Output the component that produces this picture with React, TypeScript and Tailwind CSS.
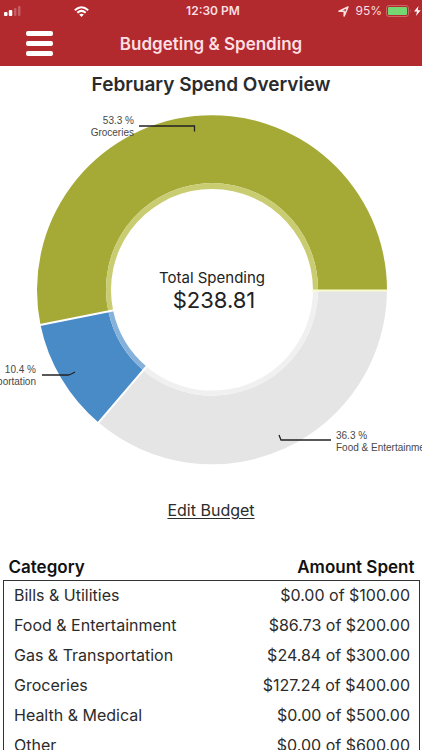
import { Fragment } from "react"

const slices = [
  {
    name: "Groceries",
    percent: "53.3 %",
    color: "#a5aa37",
    outer: "M387 290A175 175 0 1 0 40.500 325L108.400 311.500A106 106 0 1 1 318 290Z",
    inner: "M318 290A106 106 0 1 0 108.400 311.500L113.100 310.500A101 101 0 1 1 313 290Z",
    innerColor: "#c9cc70",
    line: "M139 126H194.500V131.500",
    anchor: "end" as const,
    x: 134,
    y: 124,
  },
  {
    name: "Transportation",
    percent: "10.4 %",
    color: "#488bc7",
    outer: "M40.500 325A175 175 0 0 0 98.500 422.500L143.200 370.300A106 106 0 0 1 108.400 311.500Z",
    inner: "M108.400 311.500A106 106 0 0 0 143.200 370.300L146.500 366.500A101 101 0 0 1 113.100 310.500Z",
    innerColor: "#85b1da",
    line: "M42 375H68Q70 375 75 372",
    anchor: "end" as const,
    x: 36,
    y: 373,
  },
  {
    name: "Food & Entertainment",
    percent: "36.3 %",
    color: "#e5e5e5",
    outer: "M98.500 422.500A175 175 0 0 0 387 290L318 290A106 106 0 0 1 143.200 370.300Z",
    inner: "M143.200 370.300A106 106 0 0 0 318 290L313 290A101 101 0 0 1 146.500 366.500Z",
    innerColor: "#f0f0f0",
    line: "M331 440H281L279 435",
    anchor: "start" as const,
    x: 336,
    y: 439,
  },
]

const budgets = [
  { category: "Bills & Utilities", amount: "$0.00 of $100.00" },
  { category: "Food & Entertainment", amount: "$86.73 of $200.00" },
  { category: "Gas & Transportation", amount: "$24.84 of $300.00" },
  { category: "Groceries", amount: "$127.24 of $400.00" },
  { category: "Health & Medical", amount: "$0.00 of $500.00" },
  { category: "Other", amount: "$0.00 of $600.00" },
]

function StatusBar() {
  return (
    <div className="grid h-[22px] grid-cols-3 items-center pl-1 text-[#fbdfe1]">
      <div className="flex items-center">
        <svg width="18" height="10" viewBox="0 0 18 10" fill="#fff" aria-hidden="true">
          <rect x="0" y="6" width="3.500" height="4" rx="1" />
          <rect x="4.800" y="4" width="3.500" height="6" rx="1" />
          <rect x="10" y="2" width="2.500" height="8" rx="1" opacity=".25" />
          <rect x="14" y="0" width="2.500" height="10" rx="1" opacity=".25" />
        </svg>
        <svg className="ml-[52px]" width="15" height="11" viewBox="0 0 15 11" aria-hidden="true">
          <g fill="none" stroke="#fff" strokeWidth="2">
            <path d="M.8 4.200Q7.500-1.800 14.200 4.200" />
            <path d="M3.300 6.700Q7.500 3 11.700 6.700" />
          </g>
          <path d="M5.200 8.600Q7.500 6.800 9.800 8.600L7.500 11Z" fill="#fff" />
        </svg>
      </div>
      <span className="text-center text-xs font-semibold whitespace-nowrap">12:30 PM</span>
      <div className="flex items-center justify-end">
        <svg width="11" height="11" viewBox="0 0 11 11" aria-hidden="true">
          <path d="M1 5.200L10 1L6.200 10V5.200Z" fill="none" stroke="currentColor" strokeWidth="1.500" strokeLinejoin="round" />
        </svg>
        <span className="ml-1.5 text-xs">95%</span>
        <svg className="ml-1" width="26" height="12" viewBox="0 0 26 12" aria-hidden="true">
          <rect x=".5" y=".5" width="22" height="11" rx="2.500" fill="none" stroke="#cc6369" />
          <rect x="2" y="2" width="19" height="8" rx="1" fill="#76d672" />
          <path d="M24 4Q25.500 6 24 8Z" fill="#cc6369" />
        </svg>
        <svg className="mr-px ml-0.5" width="7" height="10" viewBox="0 0 7 10" aria-hidden="true">
          <path d="M4.500 0L0 5.500H3L2 10L6.700 4.200H3.700Z" fill="#fff" />
        </svg>
      </div>
    </div>
  )
}

function SpendChart() {
  return (
    <svg className="block w-full" viewBox="0 102 422 380" role="img" aria-label="Spending by category">
      {slices.map((slice) => (
        <Fragment key={slice.name}>
          <path d={slice.outer} fill={slice.color} />
          <path d={slice.inner} fill={slice.innerColor} />
        </Fragment>
      ))}
      <g stroke="#fff" strokeWidth="2">
        <path d="M40 325.100L114 310.300M98 423.100L147 365.900" />
        <path d="M312 290.500H388" stroke="#fbfbd0" />
      </g>
      {slices.map((slice) => (
        <g key={slice.name}>
          <path d={slice.line} fill="none" stroke="#222" strokeWidth="1.300" />
          <text textAnchor={slice.anchor} fill="#484848" className="font-['Liberation_Sans'] text-[10px]">
            <tspan x={slice.x} y={slice.y}>{slice.percent}</tspan>
            <tspan x={slice.x} dy="12">{slice.name}</tspan>
          </text>
        </g>
      ))}
      <g textAnchor="middle" fill="#222">
        <text x="212" y="283" className="text-[15px]">Total Spending</text>
        <text x="214" y="308" className="text-[22px]">$238.81</text>
      </g>
    </svg>
  )
}

export default function App() {
  return (
    <div className="h-screen overflow-hidden bg-white font-[Inter,sans-serif] text-[#2b2b2b]">
      <header className="bg-[#b2292e]">
        <StatusBar />
        <div className="grid h-11 grid-cols-[80px_1fr_80px] items-center">
          <button type="button" aria-label="Menu" className="flex w-[54px] flex-col gap-[5px] pb-0.5 pl-[26px]">
            <span className="h-[5px] w-[27px] rounded-xs bg-white" />
            <span className="h-[5px] w-[27px] rounded-xs bg-white" />
            <span className="h-[5px] w-[27px] rounded-xs bg-white" />
          </button>
          <h1 className="pt-0.5 text-center text-[17px] font-semibold whitespace-nowrap text-[#fbdfe1]">Budgeting &amp; Spending</h1>
        </div>
      </header>

      <main>
        <h2 className="h-9 text-center text-[19px] leading-[38px] font-semibold">February Spend Overview</h2>
        <SpendChart />
        <div className="mt-4 text-center">
          <a href="#edit-budget" className="text-base leading-6 underline underline-offset-2">Edit Budget</a>
        </div>

        <div className="mt-8 pr-0.5 pl-[3px]">
          <table className="w-full border-collapse text-base">
            <thead>
              <tr className="h-[26px] text-[17px] leading-6 text-[#111]">
                <th scope="col" className="pl-[5px] text-left font-semibold">Category</th>
                <th scope="col" className="pr-[5px] text-right font-semibold">Amount Spent</th>
              </tr>
            </thead>
            <tbody className="border border-[#333]">
              {budgets.map((budget) => (
                <tr key={budget.category} className="h-[30px]">
                  <td className="pl-2.5">{budget.category}</td>
                  <td className="pr-[9px] text-right">{budget.amount}</td>
                </tr>
              ))}
            </tbody>
          </table>
        </div>
      </main>
    </div>
  )
}
